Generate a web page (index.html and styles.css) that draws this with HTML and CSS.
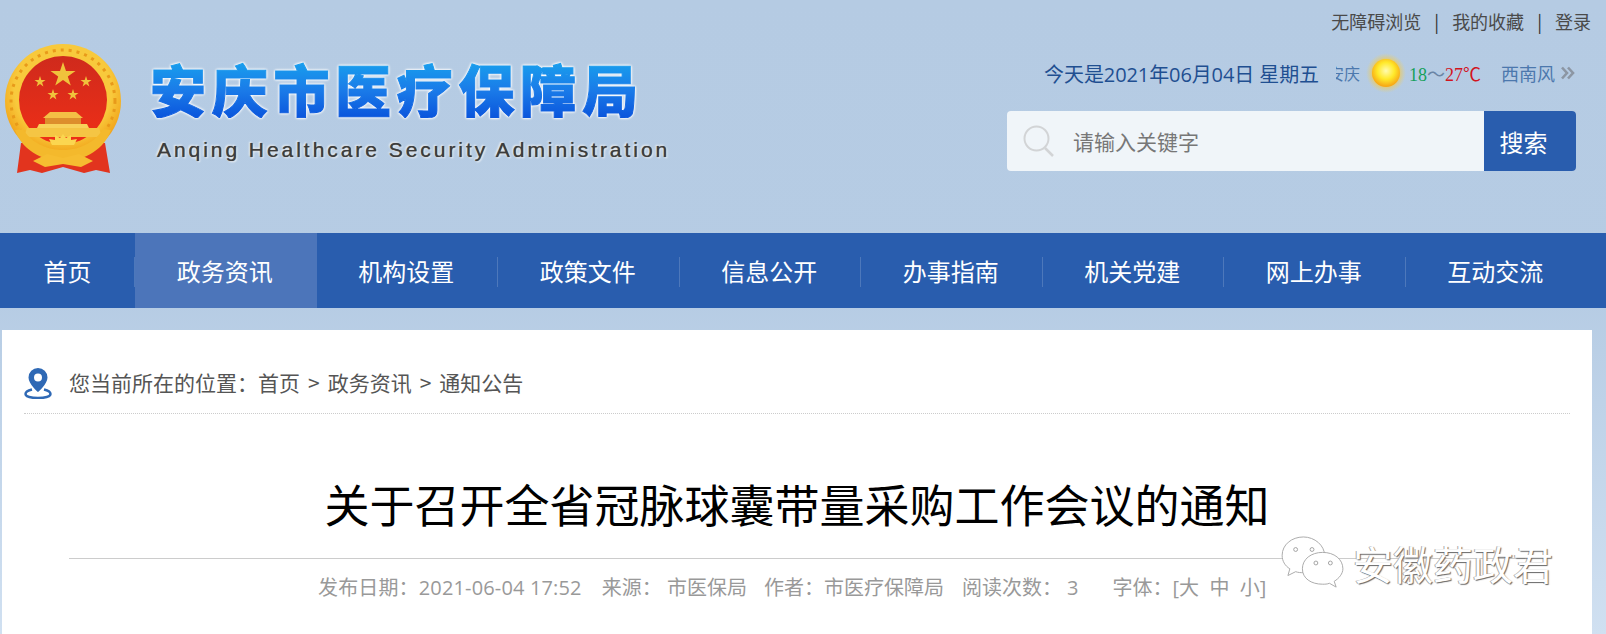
FILE: index.html
```html
<!DOCTYPE html>
<html lang="zh-CN">
<head>
<meta charset="utf-8">
<title>安庆市医疗保障局</title>
<link rel="stylesheet" href="styles.css">
</head>
<body>
<header class="header">
  <div class="brand">
    <svg class="emblem" viewBox="0 0 120 129" aria-hidden="true">
      <defs>
        <radialGradient id="gold" cx="50%" cy="40%" r="60%"><stop offset="0.7" stop-color="#f8c93c"/><stop offset="0.88" stop-color="#f3ad22"/><stop offset="1" stop-color="#ee9a1c"/></radialGradient>
        <linearGradient id="red" x1="0" y1="0" x2="0" y2="1"><stop offset="0" stop-color="#cf2a1c"/><stop offset="1" stop-color="#ef2f17"/></linearGradient>
      </defs>
      <path d="M14 129l4-30h84l5 30-14-3-12 3-21-6-21 6-12-3z" fill="#e2341e"/>
      <ellipse cx="60" cy="57" rx="58" ry="57" fill="url(#gold)"/>
      <ellipse cx="60" cy="57" rx="52" ry="51" fill="none" stroke="#e89a1a" stroke-width="3" stroke-dasharray="3 5"/>
      <ellipse cx="60" cy="56" rx="44" ry="44" fill="url(#red)"/>
      <g fill="#f0c23c">
        <polygon points="60,18 63,27 72.500,27 64.800,32.600 67.800,41.600 60,36 52.200,41.600 55.200,32.600 47.500,27 57,27"/>
        <polygon points="37,32 38.300,36 42.500,36 39.100,38.500 40.400,42.500 37,40 33.600,42.500 34.900,38.500 31.500,36 35.700,36"/>
        <polygon points="83,32 84.300,36 88.500,36 85.100,38.500 86.400,42.500 83,40 79.600,42.500 80.900,38.500 77.500,36 81.700,36"/>
        <polygon points="50,45 51.300,49 55.500,49 52.100,51.500 53.400,55.500 50,53 46.600,55.500 47.900,51.500 44.500,49 48.700,49"/>
        <polygon points="70,45 71.300,49 75.500,49 72.100,51.500 73.400,55.500 70,53 66.600,55.500 67.900,51.500 64.500,49 68.700,49"/>
      </g>
      <path d="M47 68h26l7 6H40z" fill="#f4bf45"/>
      <path d="M42 74h36v6H42z" fill="#dd8f2c"/>
      <path d="M36 80h48l2 4H34z" fill="#f8d25a"/>
      <path d="M24 84h72l3 9H21z" fill="#f5c544"/>
      <path d="M12 86c6 18 25 31 48 31s42-13 48-31l-8-1c-7 12-22 21-40 21s-33-9-40-21z" fill="#f4b92c"/>
      <path d="M60 90l3 4 5-3 0 5 6-1-3 6H49l-3-6 6 1 0-5 5 3z" fill="#fbd650"/>
      <path d="M30 117l14-7 16 4 16-4 14 7-12 6-18-3-18 3z" fill="#f6bd31"/>
    </svg>
    <div class="brand-text">
      <div class="brand-name">安庆市医疗保障局</div>
      <div class="brand-en">Anqing Healthcare Security Administration</div>
    </div>
  </div>
  <div class="tools">
    <div class="toplinks"><a>无障碍浏览</a><i>|</i><a>我的收藏</a><i>|</i><a>登录</a></div>
    <div class="dateline">
      <span class="date">今天是2021年06月04日 星期五</span>
      <span class="city"><span>安庆</span></span>
      <svg class="sun" viewBox="0 0 40 40" aria-hidden="true">
        <defs>
          <radialGradient id="sunfill" cx="50%" cy="42%" r="55%"><stop offset="0" stop-color="#fffbb0"/><stop offset="0.55" stop-color="#ffe92a"/><stop offset="1" stop-color="#f7a916"/></radialGradient>
          <radialGradient id="halo"><stop offset="0.6" stop-color="#f0c850" stop-opacity=".9"/><stop offset="1" stop-color="#e8d070" stop-opacity="0"/></radialGradient>
        </defs>
        <circle cx="20" cy="20" r="20" fill="url(#halo)"/>
        <circle cx="20" cy="20" r="14" fill="url(#sunfill)"/>
      </svg>
      <span class="temp"><b class="low">18</b><b class="sep">～</b><b class="high">27℃</b></span>
      <span class="wind">西南风</span>
      <svg class="more" viewBox="0 0 14 14" aria-hidden="true"><path d="M1 1.500l5 5.500-5 5.500M7 1.500l5 5.500-5 5.500" fill="none" stroke="#8c96a3" stroke-width="2.600"/></svg>
    </div>
    <form class="search">
      <svg class="search-icon" viewBox="0 0 32 32" aria-hidden="true"><circle cx="13.500" cy="13.500" r="12" fill="none" stroke="#d2d4d6" stroke-width="2"/><path d="M22 23l8 8" stroke="#d2d4d6" stroke-width="2.500"/></svg>
      <span class="search-text">请输入关键字</span>
      <span class="search-btn">搜索</span>
    </form>
  </div>
</header>
<nav class="nav">
  <a class="home">首页</a>
  <a class="active">政务资讯</a>
  <a>机构设置</a>
  <a>政策文件</a>
  <a>信息公开</a>
  <a>办事指南</a>
  <a>机关党建</a>
  <a>网上办事</a>
  <a>互动交流</a>
</nav>
<main class="card">
  <div class="crumbs">
    <svg class="pin" viewBox="0 0 28 32" aria-hidden="true">
      <path d="M14 1a9.500 9.500 0 0 0-9.500 9.500C4.500 17 14 25 14 25s9.500-8 9.500-14.500A9.500 9.500 0 0 0 14 1zm0 13.500a4 4 0 1 1 0-8 4 4 0 0 1 0 8z" fill="#2f69b5"/>
      <path d="M8 22.500C4 23.500 1.500 25 1.500 27c0 2.500 5.500 4 12.500 4s12.500-1.500 12.500-4c0-2-2.500-3.500-6.500-4.500" fill="none" stroke="#2f69b5" stroke-width="2.500"/>
    </svg>
    <span>您当前所在的位置：首页<i class="gt">&gt;</i>政务资讯<i class="gt">&gt;</i>通知公告</span>
  </div>
  <h1 class="title">关于召开全省冠脉球囊带量采购工作会议的通知</h1>
  <div class="meta">
    <span class="published">发布日期：2021-06-04 17:52</span>
    <span>来源：&nbsp;市医保局</span>
    <span class="author">作者：市医疗保障局</span>
    <span class="reads">阅读次数：&nbsp;3</span>
    <span>字体：[大&nbsp;&nbsp;中&nbsp;&nbsp;小]</span>
  </div>
</main>
<div class="watermark">
  <svg class="wechat" viewBox="0 0 66 56" aria-hidden="true">
    <g fill="#fff" stroke="#a9a9a9" stroke-width="1">
      <path d="M23 1C11 1 1 9 1 20c0 6 3 11 8 14l-2 7 8-4c3 1 5 1 8 1 12 0 22-8 22-18S35 1 23 1z"/>
      <path d="M43 17c-12 0-21 7-21 17s9 16 21 16c2 0 5 0 7-1l7 4-2-6c5-3 9-8 9-13 0-10-9-17-21-17z"/>
    </g>
    <g fill="none" stroke="#a0a0a0"><circle cx="15" cy="14" r="2"/><circle cx="32" cy="14" r="2"/><circle cx="36" cy="28" r="2"/><circle cx="51" cy="28" r="2"/></g>
  </svg>
  <span>安徽药政君</span>
</div>
</body>
</html>
```

FILE: styles.css
```css
* { box-sizing: border-box; }
html, body { margin: 0; padding: 0; }
body {
  position: relative;
  height: 634px;
  overflow: hidden;
  font-family: "Noto Sans CJK SC", "Noto Sans", sans-serif;
  background: linear-gradient(180deg, #b5cbe3 0, #b6cce4 300px, #d0e0f1 634px);
  color: #555;
}
.header {
  height: 233px;
  display: flex;
  justify-content: space-between;
  padding-left: 3px;
}
.brand { display: flex; align-items: flex-start; padding-top: 44px; }
.emblem { width: 120px; height: 129px; flex: none; }
.brand-text { margin-left: 27px; }
.brand-name {
  font-size: 56px;
  line-height: 60px;
  margin-top: 14px;
  font-weight: 900;
  letter-spacing: 5.700px;
  white-space: nowrap;
  background: linear-gradient(180deg, #18a4ee 0%, #1a7ae8 55%, #0a55dc 100%);
  -webkit-background-clip: text;
  background-clip: text;
  color: transparent;
  -webkit-text-stroke: 1px transparent;
  filter: drop-shadow(0 0 1px #fff) drop-shadow(0 0 1px #fff);
}
.brand-en {
  margin: 19px 0 0 7px;
  font-family: "Liberation Sans", sans-serif;
  font-size: 21px;
  line-height: 26px;
  letter-spacing: 2.950px;
  color: #3c3c3c;
  white-space: nowrap;
  text-shadow: 0 0 1px #555, 1px 1px 2px #fff, -1px -1px 2px #fff;
}
.tools { width: 606px; display: flex; flex-direction: column; align-items: flex-end; padding-right: 14px; }
.toplinks { display: flex; align-items: center; height: 26px; margin-top: 8px; margin-right: 1px; font-size: 18px; color: #4a4a4a; }
.toplinks i { font-style: normal; margin: 0 13px; color: #333; }
.dateline { display: flex; align-items: center; height: 40px; margin-top: 19px; margin-right: 17px; }
.date { font-family: "Open Sans", "Noto Sans CJK SC", sans-serif; font-size: 20px; letter-spacing: -0.100px; color: #1f4f91; white-space: nowrap; }
.city { width: 24px; margin-left: 17px; overflow: hidden; display: flex; justify-content: flex-end; font-size: 16px; color: #4c78ad; white-space: nowrap; }
.city span { flex: none; }
.sun { width: 40px; height: 40px; margin: 0 3px 0 6px; flex: none; }
.temp { font-family: "Liberation Serif", "Noto Sans CJK SC", serif; font-size: 18px; white-space: nowrap; }
.temp b { font-weight: 400; }
.low { color: #16a05a; }
.sep { color: #6a85a5; }
.high { color: #d2141e; }
.wind { margin-left: 20px; font-size: 18px; color: #4c78ad; white-space: nowrap; }
.more { width: 14px; height: 14px; margin-left: 6px; }
.search {
  width: 569px;
  height: 60px;
  margin-top: 18px;
  margin-right: 16px;
  display: flex;
  align-items: center;
  background: #f0f5f9;
  border-radius: 4px;
  overflow: hidden;
}
.search-icon { width: 32px; height: 32px; margin-left: 16px; flex: none; }
.search-text { flex: 1; margin-left: 18px; font-size: 21px; color: #777; }
.search-btn { width: 92px; height: 100%; display: flex; align-items: center; justify-content: center; padding-right: 13px; background: #295dae; color: #fff; font-size: 24px; }
.nav { height: 75px; display: flex; background: #295dae; color: #fff; }
.nav a {
  width: 181.500px;
  display: flex;
  align-items: center;
  justify-content: center;
  padding-right: 2px;
  font-size: 24px;
  position: relative;
}
.nav a.home { width: 135px; padding-right: 0; }
.nav a + a::before {
  content: "";
  position: absolute;
  left: -1px;
  top: 24px;
  height: 30px;
  width: 1px;
  background: #4d78bb;
}
.nav a.active { background: #4c75ba; }
.nav a.active + a::before { display: none; }
.card {
  margin: 22px 14px 0 2px;
  height: 304px;
  background: #fff;
  padding: 0 22px;
}
.crumbs {
  height: 84px;
  display: flex;
  align-items: center;
  border-bottom: 1px dotted #ccc;
  font-size: 21px;
  color: #555;
  padding-top: 21px;
  white-space: nowrap;
}
.gt { font-style: normal; margin: 0 8px; }
.pin { width: 28px; height: 32px; margin-right: 17px; margin-top: 1px; flex: none; }
.title {
  margin: 0 45px;
  height: 145px;
  padding-top: 57px;
  border-bottom: 1px solid #ccc;
  text-align: center;
  font-size: 45px;
  line-height: 66px;
  font-weight: 400;
  color: #000;
  white-space: nowrap;
}
.meta {
  margin-top: 15px;
  padding-left: 294px;
  display: flex;
  gap: 20px;
  font-family: "Open Sans", "Noto Sans CJK SC", sans-serif;
  font-size: 20px;
  line-height: 28px;
  color: #999;
  white-space: nowrap;
}
.published { letter-spacing: 0.150px; }
.author { margin-left: -3px; }
.reads { margin-left: -2px; margin-right: 14px; }
.watermark {
  position: absolute;
  left: 1281px;
  top: 533px;
  display: flex;
  align-items: center;
  color: #fff;
  font-size: 40px;
  line-height: 60px;
  text-shadow: 1px 1px 1px #666, -1px 0 0 #aaa;
}
.wechat { width: 64px; height: 54px; margin-right: 8px; }
```
